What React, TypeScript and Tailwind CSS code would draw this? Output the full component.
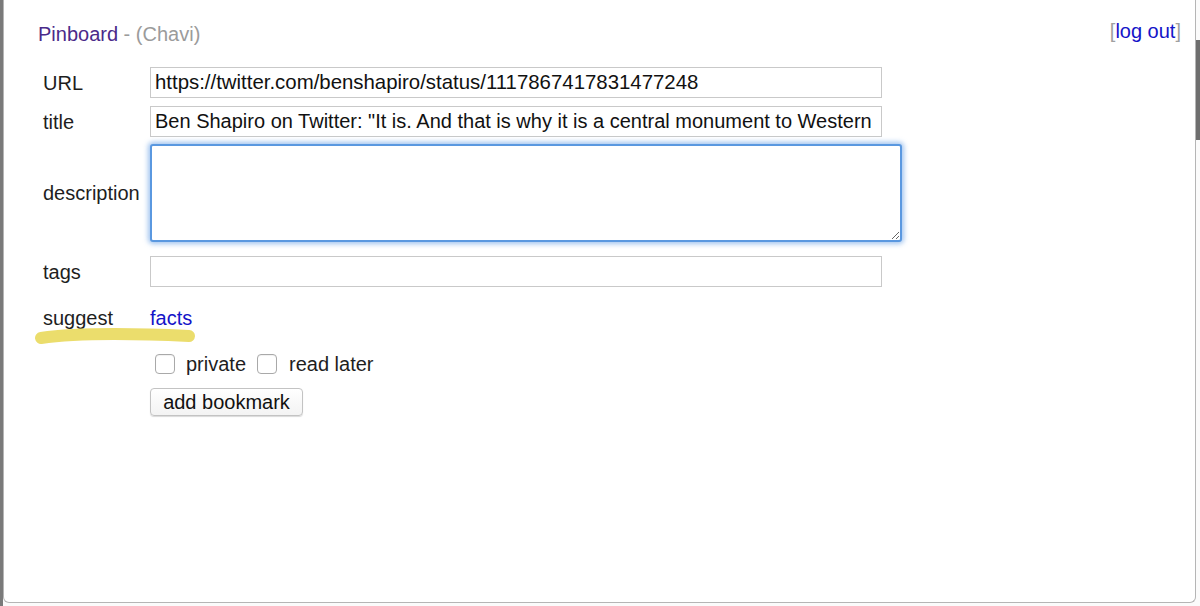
import React from 'react';

const inputBox =
  'h-[31px] border border-[#c9c9c9] bg-white px-[4px] text-[#111] outline-none';

function Row({ label, children, className = '' }: { label: string; children: React.ReactNode; className?: string }) {
  return (
    <div className={`flex items-center ${className}`}>
      <div className="w-[108px] shrink-0 pl-[1px] text-[20px] leading-[24px] text-[#1e1e1e]">{label}</div>
      {children}
    </div>
  );
}

function Box() {
  return <span className="inline-block h-[20px] w-[20px] rounded-[4px] border border-[#a9a9a9] bg-white shadow-[inset_0_1px_1px_rgba(0,0,0,0.06)]" />;
}

export default function App() {
  return (
    <div className="relative h-[606px] w-[1200px] overflow-hidden bg-[#fbfbfb] font-['Liberation_Sans',Arial,sans-serif]">
      {/* page behind the popup */}
      <div className="absolute left-0 top-0 h-full w-[3px] bg-[#7a7a7a]" />
      <div className="absolute right-0 top-[40px] h-[100px] w-[4px] bg-[#6e6e6e]" />

      <div className="relative ml-[3px] mr-[4px] h-[603px] rounded-b-[6px] border-x border-b border-[#b5b5b5] bg-white">
        <header className="flex items-start justify-between pl-[34px] pr-[14px] pt-[22px]">
          <div className="text-[20px] leading-[24px]">
            <span className="text-[#4b2a8a]">Pinboard</span>
            <span className="text-[#9b9b9b]"> - (Chavi)</span>
          </div>
          <div className="-mt-[3px] text-[20px] leading-[24px]">
            <span className="text-[#a0a0a0]">[</span>
            <span className="text-[#1414c8]">log out</span>
            <span className="text-[#a0a0a0]">]</span>
          </div>
        </header>

        <form className="pl-[38px] pt-[21px]" onSubmit={(e) => e.preventDefault()}>
          <Row label="URL">
            <input
              readOnly
              className={`${inputBox} w-[732px] text-[20.4px]`}
              value="https://twitter.com/benshapiro/status/1117867417831477248"
            />
          </Row>
          <Row label="title" className="mt-[8px]">
            <input
              readOnly
              className={`${inputBox} w-[732px] text-[20px]`}
              value={'Ben Shapiro on Twitter: "It is. And that is why it is a central monument to Western civilization"'}
            />
          </Row>
          <Row label="description" className="mt-[7px]">
            <textarea
              className="h-[98px] w-[752px] rounded-[3px] border-2 border-[#5a98e0] bg-white text-[20px] shadow-[0_0_5px_2px_rgba(110,165,230,0.65)] outline-none"
            />
          </Row>
          <Row label="tags" className="mt-[14px]">
            <input readOnly className={`${inputBox} w-[732px] text-[20px]`} value="" />
          </Row>

          <div className="relative mt-[19px] flex items-center">
            <div className="w-[108px] shrink-0 pl-[1px] text-[20px] leading-[24px] text-[#1e1e1e]">suggest</div>
            <span className="text-[20px] leading-[24px] text-[#1414c8]">facts</span>
            <svg className="absolute left-[-7px] top-[18px]" width="166" height="26" viewBox="0 0 166 26">
              <path
                d="M6 14 C 40 9, 90 9, 154 12"
                fill="none"
                stroke="#ebdd6c"
                strokeWidth="12"
                strokeLinecap="round"
              />
            </svg>
          </div>

          <div className="ml-[113px] mt-[22px] flex items-center text-[20px] leading-[24px] text-[#1e1e1e]">
            <Box />
            <span className="ml-[11px]">private</span>
            <span className="ml-[11px] flex"><Box /></span>
            <span className="ml-[12px]">read later</span>
          </div>

          <div className="ml-[108px] mt-[12px]">
            <button
              type="submit"
              className="h-[28px] w-[153px] rounded-[4px] border border-[#c3c3c3] bg-gradient-to-b from-white to-[#f3f3f3] text-[20px] leading-[22px] text-[#111] shadow-[0_1px_1px_rgba(0,0,0,0.15)]"
            >
              add bookmark
            </button>
          </div>
        </form>
      </div>
    </div>
  );
}
